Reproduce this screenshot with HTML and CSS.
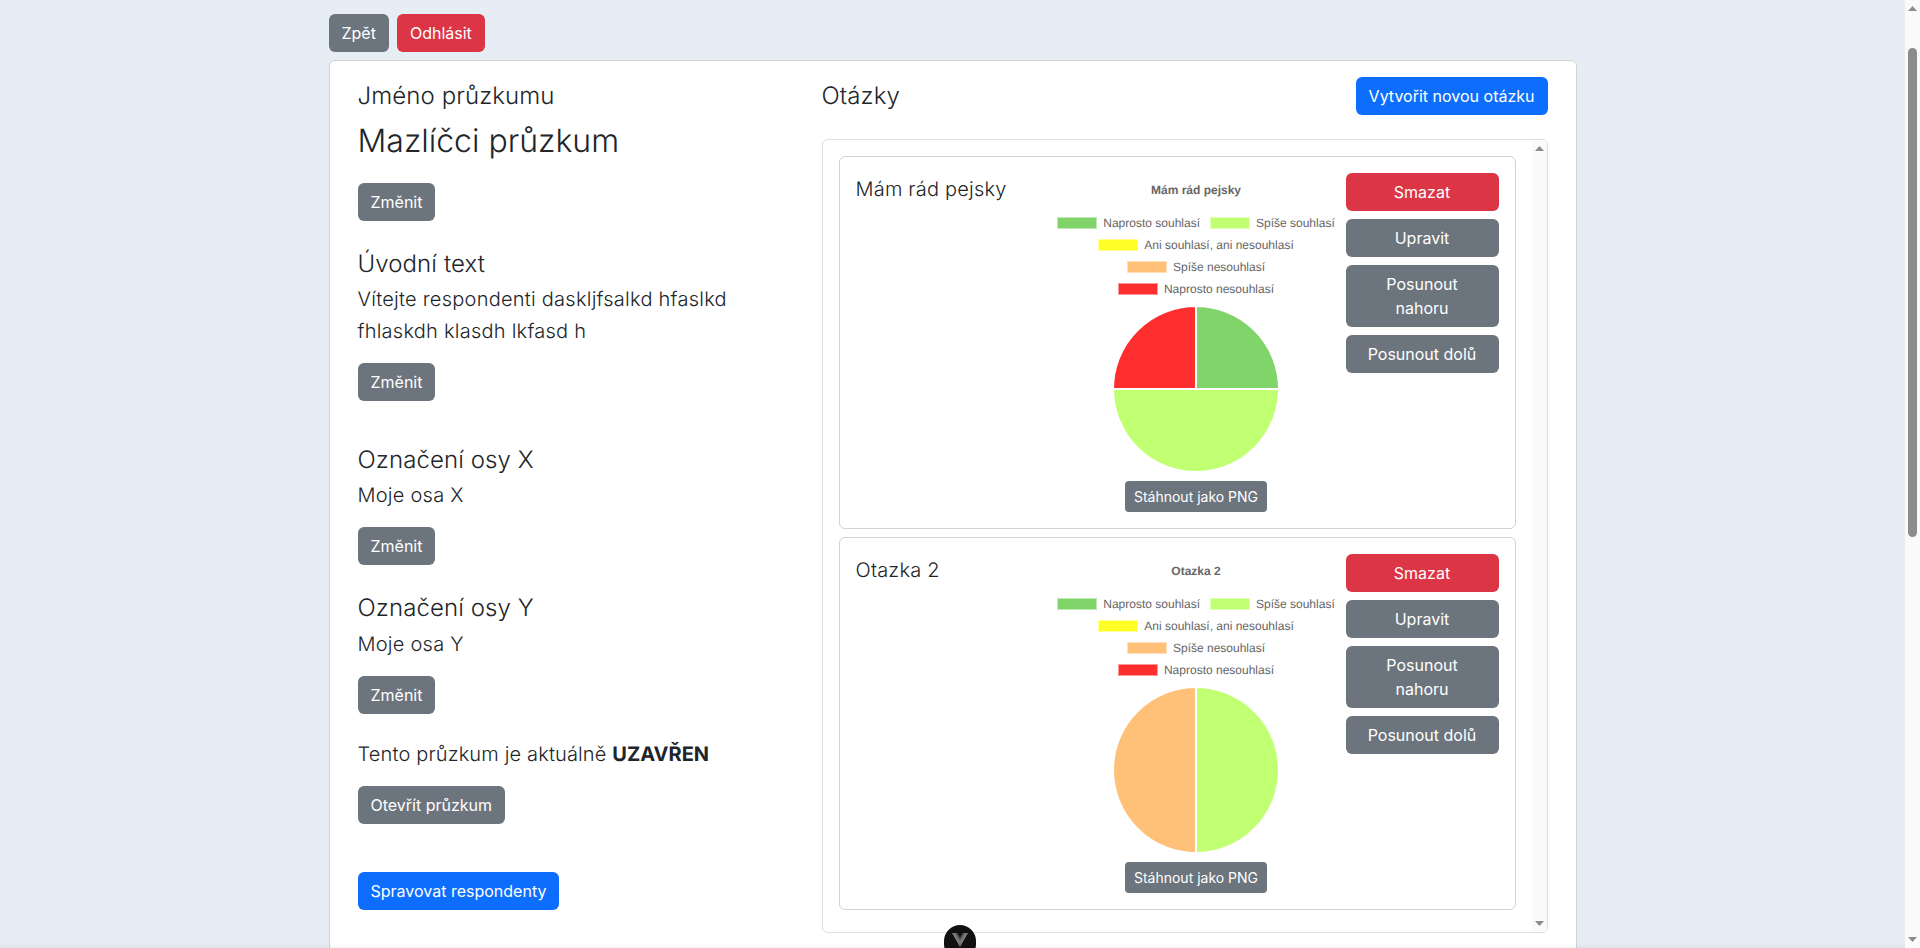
FILE: index.html
```html
<!DOCTYPE html>
<html lang="cs">
<head>
<meta charset="utf-8">
<title>Mazlíčci průzkum</title>
<link rel="stylesheet" href="styles.css">
</head>
<body>
<div class="viewport">
  <div class="page">
    <div class="topbar">
      <button class="btn gray">Zpět</button>
      <button class="btn red">Odhlásit</button>
    </div>
    <main class="card">
      <section class="settings">
        <div class="field name-field">
          <h4 class="label">Jméno průzkumu</h4>
          <h2 class="survey-name">Mazlíčci průzkum</h2>
          <button class="btn gray">Změnit</button>
        </div>
        <div class="field tall">
          <h4 class="label">Úvodní text</h4>
          <p class="value">Vítejte respondenti daskljfsalkd hfaslkd fhlaskdh klasdh lkfasd h</p>
          <button class="btn gray">Změnit</button>
        </div>
        <div class="field axis-x">
          <h4 class="label">Označení osy X</h4>
          <p class="value">Moje osa X</p>
          <button class="btn gray">Změnit</button>
        </div>
        <div class="field status-gap">
          <h4 class="label">Označení osy Y</h4>
          <p class="value">Moje osa Y</p>
          <button class="btn gray">Změnit</button>
        </div>
        <div class="field manage-gap">
          <p class="value status">Tento průzkum je aktuálně <strong>UZAVŘEN</strong></p>
          <button class="btn gray">Otevřít průzkum</button>
        </div>
        <button class="btn blue">Spravovat respondenty</button>
      </section>
      <section class="questions">
        <div class="questions-head">
          <h4 class="label flat">Otázky</h4>
          <button class="btn blue">Vytvořit novou otázku</button>
        </div>
        <div class="question-panel">
          <div class="question-list">
            <article class="question">
              <h5 class="question-title">Mám rád pejsky</h5>
              <div class="chart-col">
                <div class="chart">
                  <div class="chart-title">Mám rád pejsky</div>
                  <ul class="legend">
                    <li><i class="swatch c-green"></i>Naprosto souhlasí</li>
                    <li><i class="swatch c-lime"></i>Spíše souhlasí</li>
                    <li><i class="swatch c-yellow"></i>Ani souhlasí, ani nesouhlasí</li>
                    <li><i class="swatch c-orange"></i>Spíše nesouhlasí</li>
                    <li><i class="swatch c-red"></i>Naprosto nesouhlasí</li>
                  </ul>
                  <svg class="pie" viewBox="0 0 168 168" width="168" height="168" aria-hidden="true">
                    <path class="f-green" d="M84 84V1A83 83 0 0 1 167 84Z"/>
                    <path class="f-lime" d="M84 84H167A83 83 0 0 1 1 84Z"/>
                    <path class="f-red" d="M84 84H1A83 83 0 0 1 84 1Z"/>
                  </svg>
                </div>
                <button class="btn gray small">Stáhnout jako PNG</button>
              </div>
              <div class="actions">
                <button class="btn red">Smazat</button>
                <button class="btn gray">Upravit</button>
                <button class="btn gray">Posunout nahoru</button>
                <button class="btn gray">Posunout dolů</button>
              </div>
            </article>
            <article class="question">
              <h5 class="question-title">Otazka 2</h5>
              <div class="chart-col">
                <div class="chart">
                  <div class="chart-title">Otazka 2</div>
                  <ul class="legend">
                    <li><i class="swatch c-green"></i>Naprosto souhlasí</li>
                    <li><i class="swatch c-lime"></i>Spíše souhlasí</li>
                    <li><i class="swatch c-yellow"></i>Ani souhlasí, ani nesouhlasí</li>
                    <li><i class="swatch c-orange"></i>Spíše nesouhlasí</li>
                    <li><i class="swatch c-red"></i>Naprosto nesouhlasí</li>
                  </ul>
                  <svg class="pie" viewBox="0 0 168 168" width="168" height="168" aria-hidden="true">
                    <path class="f-lime" d="M84 84V1A83 83 0 0 1 84 167Z"/>
                    <path class="f-orange" d="M84 84V167A83 83 0 0 1 84 1Z"/>
                  </svg>
                </div>
                <button class="btn gray small">Stáhnout jako PNG</button>
              </div>
              <div class="actions">
                <button class="btn red">Smazat</button>
                <button class="btn gray">Upravit</button>
                <button class="btn gray">Posunout nahoru</button>
                <button class="btn gray">Posunout dolů</button>
              </div>
            </article>
          </div>
          <div class="scrollbar inner-bar">
            <svg class="arrow" viewBox="0 0 9 5" width="9" height="5" aria-hidden="true"><path d="M4.5 0L9 5H0Z"/></svg>
            <svg class="arrow" viewBox="0 0 9 5" width="9" height="5" aria-hidden="true"><path d="M0 0H9L4.5 5Z"/></svg>
          </div>
        </div>
      </section>
    </main>
  </div>
  <div class="bottom-shade"></div>
  <button class="devtools" aria-label="Vue DevTools">
    <svg viewBox="0 0 16 14" width="16" height="14" aria-hidden="true">
      <path class="v-outer" d="M0 0H5L8 5L11 0H16L8 14Z"/>
      <path class="v-inner" d="M3.4 0H5L8 5L11 0H12.6L8 8Z"/>
    </svg>
  </button>
</div>
<div class="scrollbar page-bar">
  <svg class="arrow" viewBox="0 0 9 5" width="9" height="5" aria-hidden="true"><path d="M4.5 0L9 5H0Z"/></svg>
  <div class="track"><div class="thumb"></div></div>
  <svg class="arrow" viewBox="0 0 9 5" width="9" height="5" aria-hidden="true"><path d="M0 0H9L4.5 5Z"/></svg>
</div>
</body>
</html>
```
FILE: styles.css
```css
* { box-sizing: border-box; }
html, body { height: 100%; }
body {
  display: flex;
  margin: 0;
  overflow: hidden;
  background: #e6edf5;
  color: #212529;
  font-family: Inter, "Liberation Sans", sans-serif;
  font-size: 16px;
  line-height: 1.5;
  text-rendering: geometricPrecision;
}
.viewport {
  position: relative;
  flex: 1;
  min-width: 0;
  overflow: hidden;
}
.page {
  width: 1248px;
  margin: 0 auto;
  padding-top: 14px;
}
.topbar { display: flex; gap: 8px; margin-bottom: 8px; }
.btn {
  display: inline-block;
  padding: 6px 12px;
  border: 1px solid transparent;
  border-radius: 6px;
  font: inherit;
  color: #fff;
  text-align: center;
  cursor: pointer;
}
.btn.small { padding: 4px 8px; font-size: 14px; border-radius: 4px; }
.gray { background: #6c757d; }
.red { background: #dc3545; }
.blue { background: #0d6efd; }
.card {
  display: flex;
  gap: 24px;
  align-items: flex-start;
  min-height: 1000px;
  padding: 16px 28px;
  background: #fff;
  border: 1px solid #d2d2d2;
  border-radius: 6px;
}
.settings { flex: 0 0 440px; padding-top: 4px; }
.label { margin: 0 0 5px; font-size: 24px; font-weight: 350; letter-spacing: .1px; line-height: 29px; }
.label.flat { margin: -2px 0 0; }
.survey-name { margin: 0 0 23px; padding-top: 7px; font-size: 32px; font-weight: 350; line-height: 38px; }
.value { margin: 0 0 16px; font-size: 20px; font-weight: 350; letter-spacing: .25px; line-height: 32px; }
.value.status { letter-spacing: .15px; }
.value.status strong { letter-spacing: 0; }
.field { margin-bottom: 28px; }
.field.tall { margin-bottom: 44px; }
.field.axis-x { margin-bottom: 28px; }
.field.axis-x + .field .label { margin-bottom: 6px; }
.field.status-gap { margin-bottom: 24px; }
.field.manage-gap { margin-bottom: 48px; }
.questions { flex: 1; min-width: 0; }
.questions-head {
  display: flex;
  justify-content: space-between;
  align-items: center;
  margin-bottom: 24px;
}
.question-panel {
  display: flex;
  overflow: hidden;
  border: 1px solid #dedede;
  border-radius: 6px;
}
.question-list {
  flex: 1;
  min-width: 0;
  padding: 16px 16px 14px;
}
.question {
  display: grid;
  grid-template-columns: 191px 299px 153px;
  padding: 16px;
  margin-bottom: 8px;
  border: 1px solid #d2d2d2;
  border-radius: 6px;
}
.question-title { margin: 0; padding-top: 4px; font-size: 20px; font-weight: 350; letter-spacing: .2px; line-height: 24px; }
.chart-col { display: flex; flex-direction: column; align-items: center; gap: 8px; }
.chart {
  display: flex;
  flex-direction: column;
  align-items: center;
  width: 299px;
  height: 300px;
  font-family: "Liberation Sans", Arial, sans-serif;
  font-size: 12px;
  line-height: 12px;
  color: #666;
}
.chart-title { margin: 10px 0 20px; font-weight: 700; line-height: 14px; }
.legend {
  display: flex;
  flex-wrap: wrap;
  justify-content: center;
  gap: 10px;
  width: 290px;
  margin: 0 0 10px;
  padding: 0;
  list-style: none;
}
.legend li { display: flex; align-items: center; gap: 6px; }
.swatch {
  display: block;
  width: 40px;
  height: 12px;
  border: 1px solid rgba(255, 255, 255, .5);
}
.c-green { background: #81d46a; }
.c-lime { background: #c1ff73; }
.c-yellow { background: #ffff26; }
.c-orange { background: #ffc078; }
.c-red { background: #ff2e2e; }
.pie { flex: none; }
.pie path { stroke: #fff; stroke-width: 2; }
.f-green { fill: #81d46a; }
.f-lime { fill: #c1ff73; }
.f-orange { fill: #ffc078; }
.f-red { fill: #ff2e2e; }
.actions { display: flex; flex-direction: column; gap: 8px; }
.scrollbar {
  flex: 0 0 15px;
  display: flex;
  flex-direction: column;
  align-items: center;
  justify-content: space-between;
  background: #fafafa;
}
.inner-bar { padding: 6px 0; }
.page-bar { padding: 6px 0; }
.arrow { display: block; flex: none; }
.arrow path { fill: #8c8c8c; }
.track {
  flex: 1;
  align-self: stretch;
  display: flex;
  justify-content: center;
  padding-top: 37px;
}
.thumb {
  width: 9px;
  height: 489px;
  border-radius: 5px;
  background: #8c8c8c;
}
.bottom-shade {
  position: absolute;
  left: 0;
  right: 0;
  bottom: 0;
  height: 6px;
  background: linear-gradient(rgba(0, 0, 0, 0), rgba(0, 0, 0, .04));
  pointer-events: none;
}
.devtools {
  position: absolute;
  left: 944px;
  bottom: -12px;
  display: flex;
  justify-content: center;
  align-items: flex-start;
  width: 32px;
  height: 35px;
  padding: 8px 0 0;
  border: 0;
  border-radius: 16px;
  background: #111;
}
.v-outer { fill: #7a7a7a; }
.v-inner { fill: #4d4d4d; }
```
